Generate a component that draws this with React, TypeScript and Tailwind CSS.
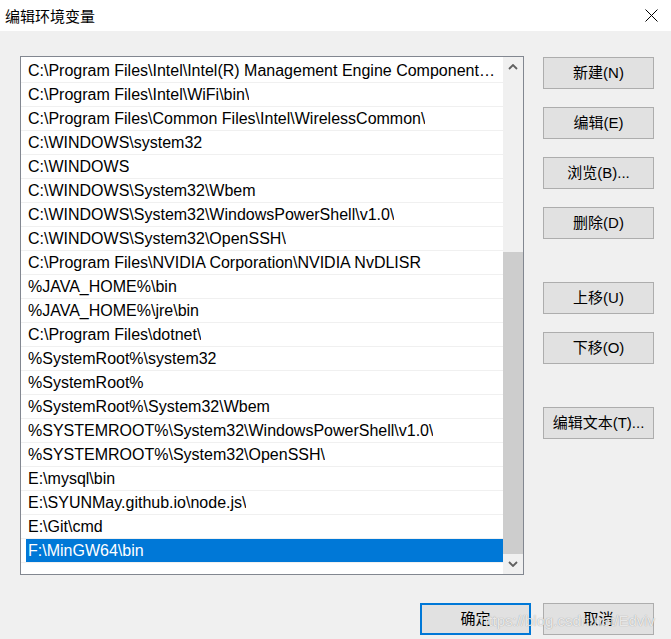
import React from "react";

// Edit environment variable dialog (Windows 10 style)

const PATHS = [
  "C:\\Program Files\\Intel\\Intel(R) Management Engine Components\\DAL",
  "C:\\Program Files\\Intel\\WiFi\\bin\\",
  "C:\\Program Files\\Common Files\\Intel\\WirelessCommon\\",
  "C:\\WINDOWS\\system32",
  "C:\\WINDOWS",
  "C:\\WINDOWS\\System32\\Wbem",
  "C:\\WINDOWS\\System32\\WindowsPowerShell\\v1.0\\",
  "C:\\WINDOWS\\System32\\OpenSSH\\",
  "C:\\Program Files\\NVIDIA Corporation\\NVIDIA NvDLISR",
  "%JAVA_HOME%\\bin",
  "%JAVA_HOME%\\jre\\bin",
  "C:\\Program Files\\dotnet\\",
  "%SystemRoot%\\system32",
  "%SystemRoot%",
  "%SystemRoot%\\System32\\Wbem",
  "%SYSTEMROOT%\\System32\\WindowsPowerShell\\v1.0\\",
  "%SYSTEMROOT%\\System32\\OpenSSH\\",
  "E:\\mysql\\bin",
  "E:\\SYUNMay.github.io\\node.js\\",
  "E:\\Git\\cmd",
  "F:\\MinGW64\\bin",
];

const SELECTED = PATHS.length - 1;

const FONT = "font-['Segoe_UI','Liberation_Sans','Noto_Sans_CJK_SC',sans-serif]";

function Button({ label, primary }: { label: string; primary?: boolean }) {
  return (
    <button
      className={
        "w-[111px] h-[32px] bg-[#e1e1e1] text-[15px] text-black flex items-center justify-center " +
        (primary ? "border-2 border-[#0078d7]" : "border border-[#adadad]")
      }
    >
      {label}
    </button>
  );
}

function Chevron({ up }: { up?: boolean }) {
  return (
    <svg width="10" height="6" viewBox="0 0 10 6">
      <path
        d={up ? "M1 5 L5 1 L9 5" : "M1 1 L5 5 L9 1"}
        fill="none"
        stroke="#606060"
        strokeWidth="1.8"
      />
    </svg>
  );
}

export default function App() {
  return (
    <div className={`relative w-[671px] h-[639px] bg-[#f0f0f0] overflow-hidden ${FONT}`}>
      {/* title bar */}
      <div className="h-[31px] bg-white flex items-center justify-between pl-[5px] pr-[13px]">
        <span className="text-[15px] text-black font-['Noto_Sans_CJK_SC',sans-serif] leading-none">
          编辑环境变量
        </span>
        <svg width="13" height="13" viewBox="0 0 13 13">
          <path d="M0.5 0.5 L12.5 12.5 M12.5 0.5 L0.5 12.5" stroke="#000" strokeWidth="1" />
        </svg>
      </div>

      <div className="flex pl-[20px] pt-[25px] gap-[19px]">
        {/* list box */}
        <div className="w-[504px] h-[519px] border border-[#828790] bg-white flex">
          <div className="flex-1 min-w-0 pt-[2px]">
            {PATHS.map((p, i) => (
              <div key={p} className="h-[24px] border-b border-[#f0f0f0] pl-[5px]">
                <div
                  className={
                    "h-[23px] pl-[2px] pr-[8px] flex items-center text-[16px] " +
                    (i === SELECTED ? "bg-[#0078d7] text-white" : "text-black")
                  }
                >
                  <span className="truncate">{p}</span>
                </div>
              </div>
            ))}
          </div>
          {/* scrollbar */}
          <div className="w-[20px] bg-[#f0f0f0] flex flex-col">
            <div className="h-[20px] flex items-center justify-center">
              <Chevron up />
            </div>
            <div className="flex-1" />
            <div className="h-[302px] bg-[#cdcdcd]" />
            <div className="h-[20px] flex items-center justify-center">
              <Chevron />
            </div>
          </div>
        </div>

        {/* side buttons */}
        <div className="flex flex-col pt-[1px]">
          <div className="flex flex-col gap-[18px]">
            <Button label="新建(N)" />
            <Button label="编辑(E)" />
            <Button label="浏览(B)..." />
            <Button label="删除(D)" />
          </div>
          <div className="flex flex-col gap-[18px] mt-[43px]">
            <Button label="上移(U)" />
            <Button label="下移(O)" />
          </div>
          <div className="mt-[43px]">
            <Button label="编辑文本(T)..." />
          </div>
        </div>
      </div>

      {/* dialog buttons */}
      <div className="flex justify-end gap-[12px] pr-[17px] mt-[28px]">
        <Button label="确定" primary />
        <Button label="取消" />
      </div>

      {/* watermark */}
      <div className="absolute left-[480px] top-[610px] text-[15px] font-['Liberation_Sans',sans-serif] text-[rgba(255,255,255,0.8)] [text-shadow:0_0_1px_rgba(0,0,0,0.4)] pointer-events-none">
        https://blog.csdn.net/Edviv
      </div>
    </div>
  );
}
